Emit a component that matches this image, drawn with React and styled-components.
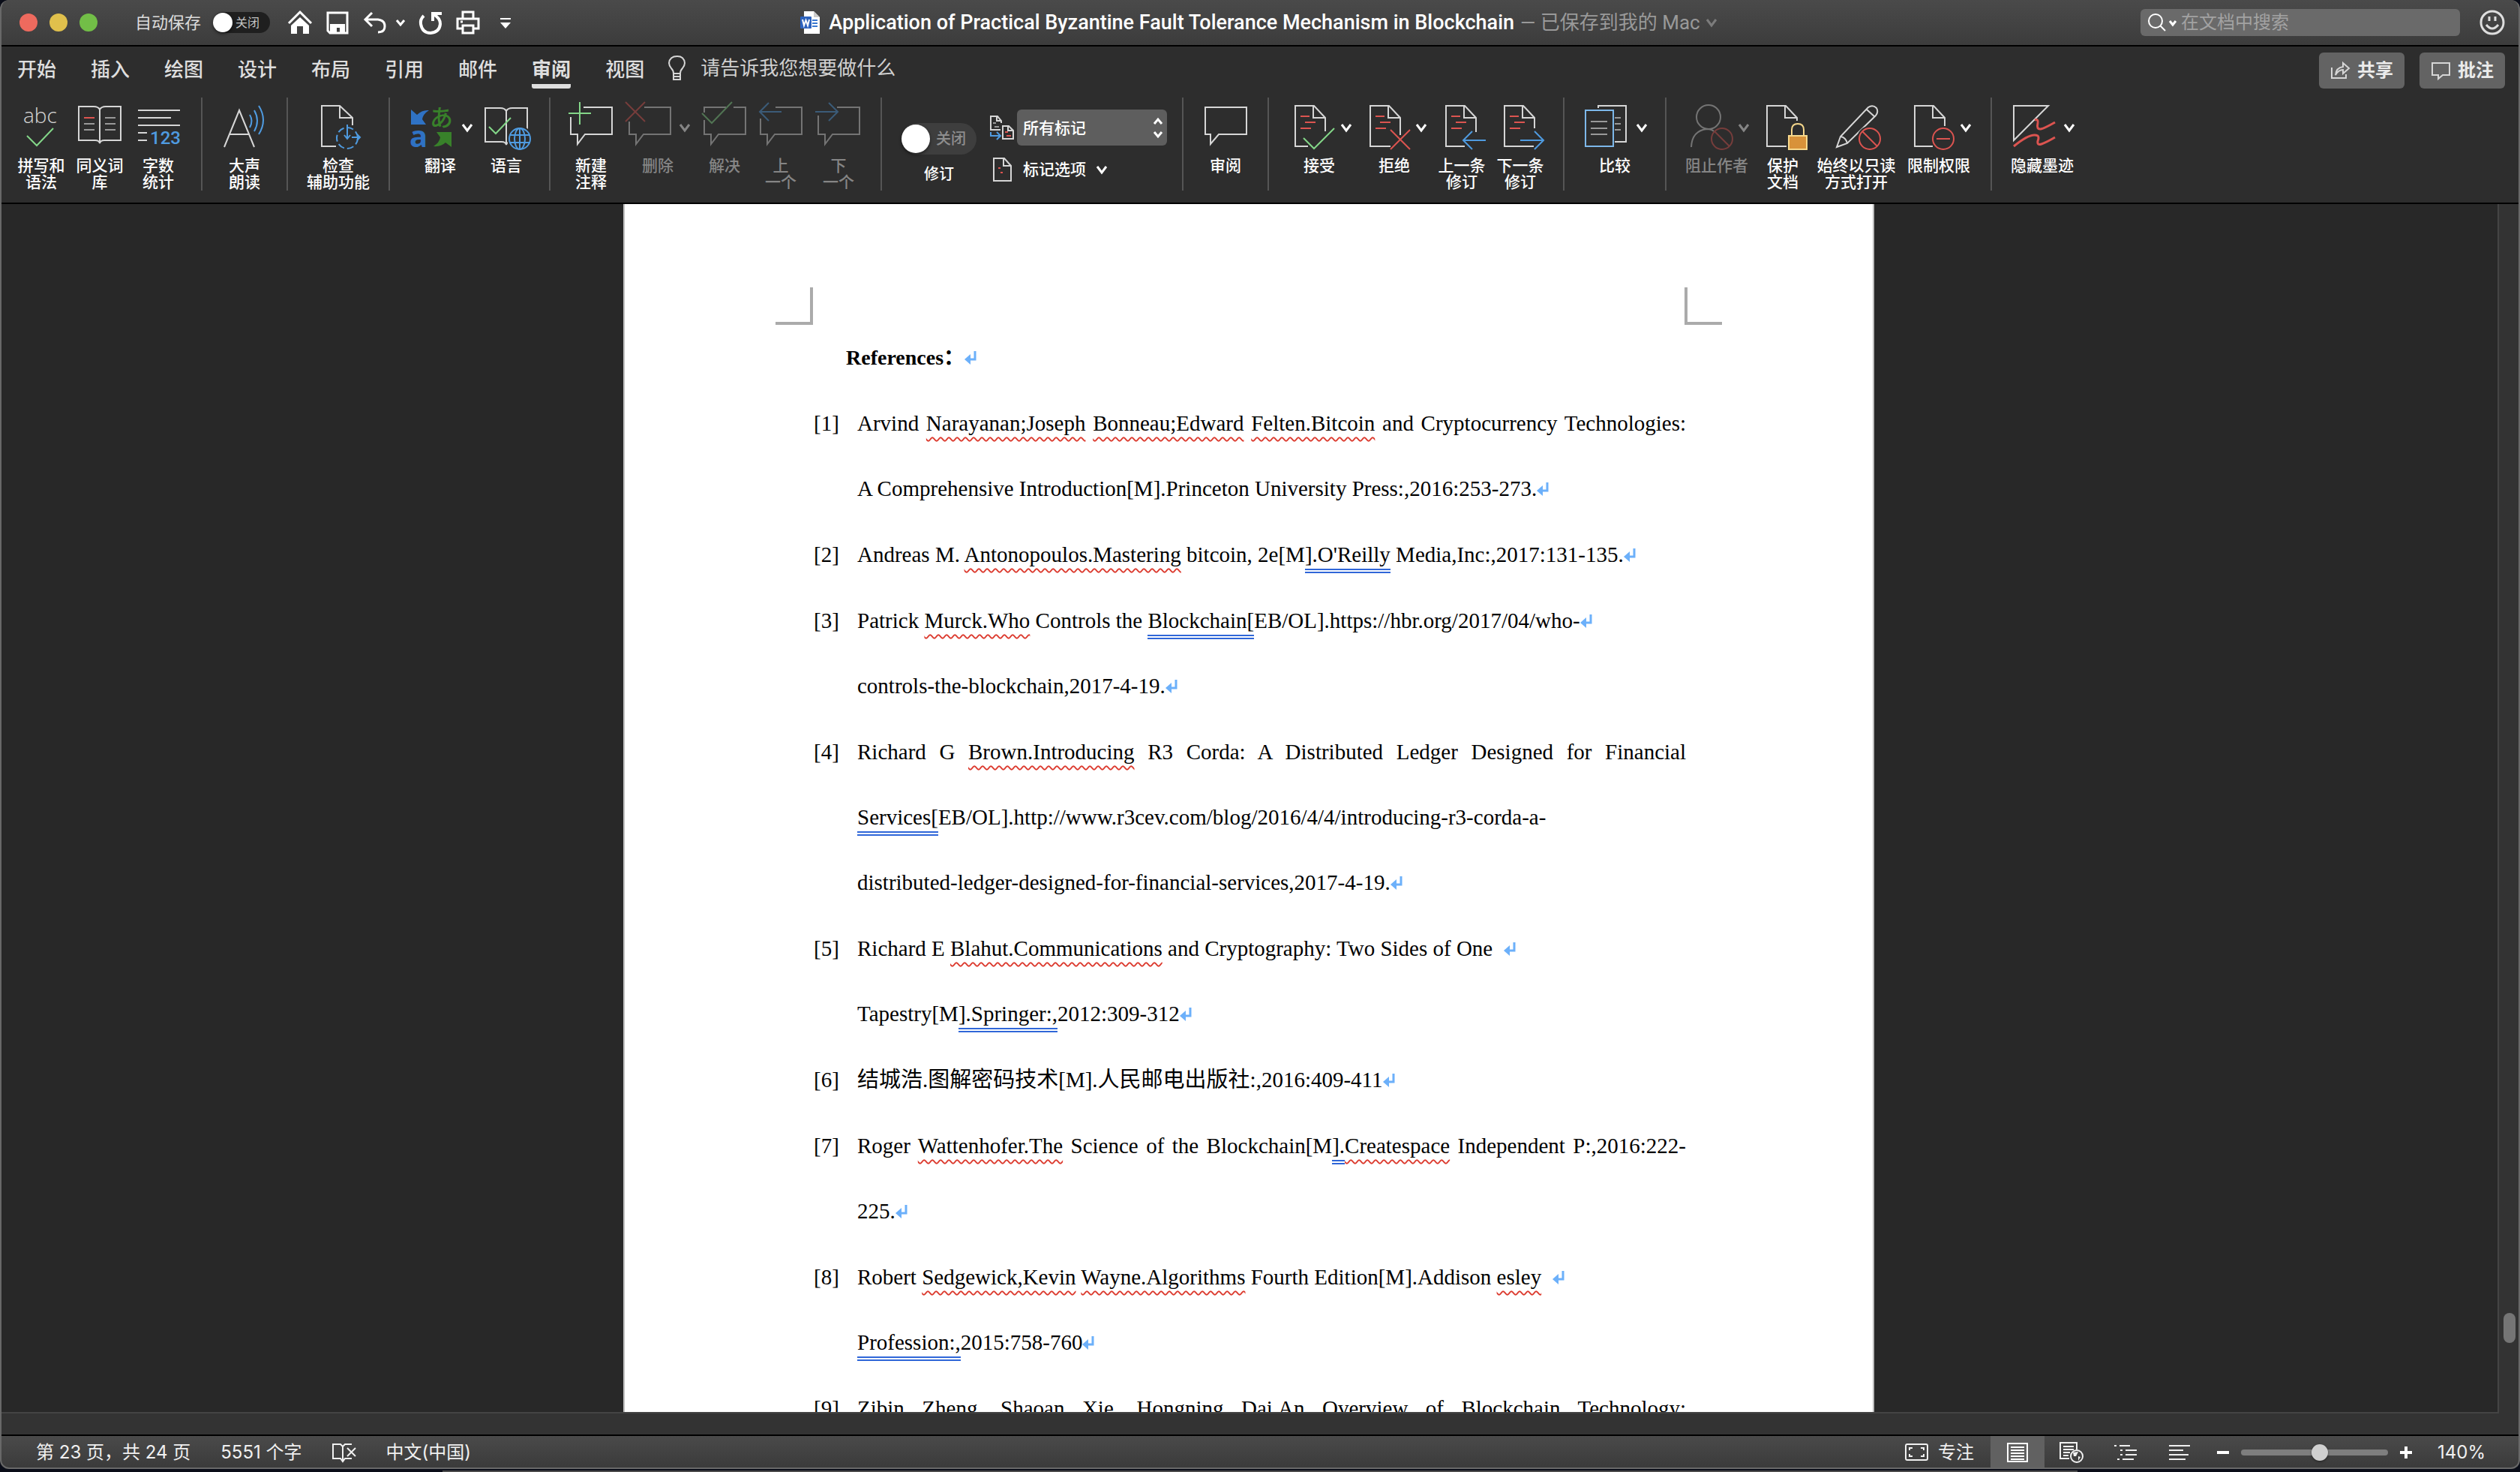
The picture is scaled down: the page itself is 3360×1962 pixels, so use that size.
import React, { Component } from 'react';
import styled, { createGlobalStyle, css } from "styled-components";

const GlobalStyle = createGlobalStyle`
  * {
    box-sizing: border-box;
  }
  body {
    margin: 0;
    background: #0a0d18;
    font-family: Inter, "Noto Sans CJK SC", sans-serif;
    color: #fff;
  }
  button, input, select {
    margin: 0;
    padding: 0;
    border: 0;
    background: none;
    color: inherit;
    font: inherit;
  }
`;

/* ---------- window ---------- */

const Desktop = styled.div`
  display: flex;
  flex-direction: column;
  height: 100vh;
`;
const Window = styled.div`
  position: relative;
  flex: 1;
  min-height: 0;
  display: flex;
  flex-direction: column;
  overflow: hidden;
  border-radius: 12px;
  background: #2d2d2d;
  &::after {
    content: '';
    position: absolute;
    inset: 0;
    border: 2px solid #686868;
    border-top: 0;
    border-radius: 12px;
    pointer-events: none;
  }
`;
const BackWindow = styled.div`
  height: 2px;
  margin: 2px 590px 0;
  background: #4c4c4c;
`;

/* ---------- title bar ---------- */

const TitleBar = styled.header`
  display: grid;
  grid-template-columns: 1fr auto 1fr;
  align-items: center;
  height: 62px;
  border-bottom: 2px solid #000;
  background: linear-gradient(#4a4a4a, #3c3c3c);
`;
const TitleLeft = styled.div`
  display: flex;
  align-items: center;
  padding-left: 26px;
`;
const Lights = styled.div`
  display: flex;
  gap: 16px;
  margin-right: 50px;
`;
const Light = styled.button`
  width: 24px;
  height: 24px;
  border-radius: 50%;
  background: ${p => p.$color};
`;
const AutoSave = styled.label`
  display: flex;
  align-items: center;
  gap: 16px;
  font-size: 22px;
  line-height: 30px;
  color: #dcdcdc;
`;
const Switch = styled.span`
  position: relative;
  display: flex;
  align-items: center;
  justify-content: flex-end;
  width: ${p => p.$large ? 100 : 76}px;
  height: ${p => p.$large ? 42 : 28}px;
  padding-right: 14px;
  border-radius: 21px;
  background: ${p => p.$large ? '#3e3e3e' : '#1f1f1f'};
  color: ${p => p.$large ? '#8e8e8e' : '#c4c4c4'};
  font-size: ${p => p.$large ? 20 : 16}px;
  line-height: 24px;
  input {
    appearance: none;
    position: absolute;
    left: 0;
    top: ${p => p.$large ? 2 : 1}px;
    width: ${p => p.$large ? 38 : 26}px;
    height: ${p => p.$large ? 38 : 26}px;
    border-radius: 50%;
    background: #fff;
    box-shadow: 0 2px 4px rgba(0, 0, 0, .5);
  }
`;
const QuickBar = styled.div`
  display: flex;
  align-items: center;
  gap: 18px;
  margin-left: 24px;
`;
const IconButton = styled.button`
  display: flex;
  align-items: center;
  gap: 12px;
  svg {
    display: block;
  }
`;
const DocTitle = styled.h1`
  display: flex;
  align-items: center;
  gap: 8px;
  margin: 0;
  font-family: Roboto, "Noto Sans CJK SC", sans-serif;
  font-size: 27px;
  line-height: 36px;
  font-weight: 500;
  white-space: nowrap;
  svg {
    margin-right: 4px;
  }
  small {
    font-size: 26px;
    font-weight: 400;
    color: #999;
  }
`;
const TitleRight = styled.div`
  display: flex;
  justify-content: flex-end;
  align-items: center;
  gap: 26px;
  padding-right: 20px;
`;
const Search = styled.label`
  display: flex;
  align-items: center;
  gap: 4px;
  width: 426px;
  height: 36px;
  padding-left: 10px;
  border-radius: 6px;
  background: #6a6a6a;
  input {
    flex: 1;
    min-width: 0;
    margin-left: 2px;
    font-size: 24px;
    line-height: 34px;
    outline: 0;
  }
  input::placeholder {
    color: #a2a2a2;
    opacity: 1;
  }
`;

/* ---------- tabs ---------- */

const TabRow = styled.div`
  display: flex;
  align-items: flex-start;
  height: 56px;
  padding: 0 20px 0 23px;
`;
const Tabs = styled.nav`
  display: flex;
  gap: 46px;
  padding-top: 14px;
`;
const Tab = styled.button`
  height: 42px;
  border-bottom: 6px solid ${p => p.$active ? '#dedede' : 'transparent'};
  border-radius: 3px;
  padding-bottom: 2px;
  font-size: 26px;
  line-height: 34px;
  font-weight: ${p => p.$active ? 700 : 500};
  color: #dedede;
`;
const TellMe = styled.button`
  display: flex;
  align-items: center;
  gap: 20px;
  margin: 10px auto 0 32px;
  font-size: 26px;
  line-height: 38px;
  color: #d0d0d0;
`;
const PillButton = styled.button`
  display: flex;
  align-items: center;
  justify-content: center;
  gap: 10px;
  width: 114px;
  height: 48px;
  margin: 8px 0 0 20px;
  border-radius: 6px;
  background: #636363;
  font-size: 24px;
  line-height: 34px;
  font-weight: 700;
  color: #ebebeb;
`;

/* ---------- ribbon ---------- */

const Ribbon = styled.section`
  display: flex;
  height: 154px;
  padding: 12px 16px 16px;
  border-bottom: 2px solid #000;
`;
const Group = styled.div`
  display: flex;
  padding-right: 18px;
  & + & {
    padding-left: 18px;
    border-left: 2px solid #555;
  }
`;
const ToolButton = styled.button`
  display: flex;
  flex-direction: column;
  align-items: center;
  gap: 8px;
  width: ${p => p.$width}px;
  padding-top: 8px;
  font-size: 21px;
  line-height: 22px;
  font-weight: 500;
  white-space: pre;
  ${p => p.disabled && css`
    color: #858585;
    svg {
      opacity: .42;
    }
  `}
`;
const ToolFace = styled.span`
  display: flex;
  align-items: center;
  gap: 8px;
`;
const TrackBox = styled.label`
  display: flex;
  flex-direction: column;
  align-items: center;
  gap: 14px;
  width: 116px;
  padding-top: 34px;
  font-size: 20px;
  line-height: 24px;
  font-weight: 500;
`;
const MarkupBox = styled.div`
  display: flex;
  flex-direction: column;
  gap: 16px;
  width: 248px;
  padding: 16px 2px 0 10px;
`;
const MarkupRow = styled.div`
  display: flex;
  align-items: center;
  gap: 4px;
`;
const SelectBox = styled.span`
  display: grid;
  flex: 1;
  align-items: center;
  border-radius: 6px;
  background: #5e5e5e;
  select, svg {
    grid-area: 1 / 1;
  }
  svg {
    justify-self: end;
    margin-right: 4px;
    pointer-events: none;
  }
  select {
    appearance: none;
    height: 48px;
    padding-left: 8px;
    font-size: 21px;
    font-weight: 500;
  }
`;
const OptionsButton = styled.button`
  display: flex;
  align-items: center;
  gap: 14px;
  padding-left: 8px;
  font-size: 21px;
  line-height: 32px;
  font-weight: 500;
`;

/* ---------- document ---------- */

const Workspace = styled.main`
  flex: 1;
  min-height: 0;
  display: flex;
  background: #333;
`;
const Canvas = styled.div`
  flex: 1;
  display: flex;
  justify-content: center;
  overflow: hidden;
  border: solid #444;
  border-width: 0 2px 2px 0;
  background: #282828;
`;
const Paper = styled.article`
  flex: 0 1 1668px;
  align-self: flex-start;
  padding: 111px 201px 0;
  border: solid #bdbdbd;
  border-width: 0 2px;
  background: #fff;
  color: #000;
  font-family: "Liberation Serif", "Noto Sans CJK SC", serif;
  font-size: 29px;
  line-height: 87px;
`;
const Corners = styled.div`
  display: flex;
  justify-content: space-between;
  &::before, &::after {
    content: '';
    width: 46px;
    height: 46px;
    border: solid #ababab;
    border-width: 0 4px 4px 0;
  }
  &::after {
    border-width: 0 0 4px 4px;
  }
`;
const Heading = styled.h2`
  margin: 0 0 1px;
  padding-left: 94px;
  font-size: 28px;
  line-height: 87px;
  font-weight: 700;
`;
const Entry = styled.div`
  display: grid;
  grid-template-columns: 58px 1fr;
  margin: 0 48px 1px 51px;
`;
const Line = styled.div`
  white-space: nowrap;
  text-align-last: ${p => p.$justify ? 'justify' : 'left'};
`;
const Spelling = styled.span`
  text-decoration: underline wavy #dc3b2f 2px;
  text-decoration-skip-ink: none;
  text-underline-offset: 8px;
`;
const Grammar = styled.span`
  padding-bottom: 3px;
  border-bottom: 6px double #2f66d8;
`;
const ScrollTrack = styled.div`
  width: 28px;
  display: flex;
  flex-direction: column;
  align-items: center;
  &::before {
    content: '';
    flex: 1476 0 0;
  }
  &::after {
    content: '';
    flex: 94 0 0;
  }
`;
const ScrollThumb = styled.div`
  width: 16px;
  height: 40px;
  border-radius: 8px;
  background: #757575;
`;
const BottomStrip = styled.div`
  height: 28px;
  background: #333;
`;

/* ---------- status bar ---------- */

const StatusBar = styled.footer`
  display: flex;
  align-items: center;
  height: 46px;
  padding: 0 48px;
  border-top: 2px solid #000;
  background: linear-gradient(#4a4a4a, #3a3a3a);
  font-size: 24px;
  line-height: 34px;
  color: #f0f0f0;
`;
const StatusLeft = styled.div`
  display: flex;
  align-items: center;
  gap: 40px;
  margin-right: auto;
`;
const FocusButton = styled(IconButton)`
  margin-right: 22px;
`;
const ViewButton = styled.button`
  display: flex;
  align-items: center;
  justify-content: center;
  width: 72px;
  height: 44px;
  background: ${p => p.$active ? '#616161' : 'none'};
`;
const Zoom = styled.div`
  display: flex;
  align-items: center;
  gap: 16px;
  margin-left: 14px;
  output {
    margin-left: 18px;
    width: 62px;
  }
`;
const Slider = styled.input`
  appearance: none;
  width: 196px;
  height: 8px;
  border-radius: 4px;
  background: #7e7e7e;
  &::-webkit-slider-thumb {
    appearance: none;
    width: 22px;
    height: 22px;
    border-radius: 50%;
    background: #d0d0d0;
    box-shadow: 0 1px 3px rgba(0, 0, 0, .5);
  }
`;

/* ---------- icons ---------- */

const LIGHT = '#d6d6d6';
const GREEN = '#83d688';
const RED = '#dc5450';
const BLUE = '#4f9be0';

const Svg = ({ w = 64, h = 64, color = LIGHT, width = 2, children }) => (
  <svg
    width={w}
    height={h}
    viewBox={`0 0 ${w} ${h}`}
    fill="none"
    stroke={color}
    strokeWidth={width}
    overflow="visible"
    aria-hidden="true"
  >
    {children}
  </svg>
);

const Chevron = ({ color = '#fff', w = 14, h = 10 }) => (
  <Svg w={w} h={h} color={color} width={3}>
    <path d={`M1 1L${w / 2} ${h - 1}L${w - 1} 1`} />
  </Svg>
);

const ReturnMark = () => (
  <Svg w={16} h={18} color="#6cb0fa" width={3}>
    <path d="M14 0V11H4" />
    <path d="M0 11L8 4V18Z" fill="#6cb0fa" stroke="none" />
  </Svg>
);

const bubble = "M{x} 5H60V41H24L14 54V41H5V{y}";
const Bubble = ({ x, y }) => <path d={bubble.replace('{x}', x).replace('{y}', y)} />;

const Doc = ({ end = 32, foot = 28 }) => (
  <>
    <path d={`M${foot} 57H11V3H36L51 19V${end}`} />
    <path d="M35 3V19H51" />
  </>
);
const RedLines = () => <path d="M18 17H30M24 25H38M18 33H32" stroke={RED} />;
const Forbidden = () => (
  <g stroke={RED}>
    <circle cx="50" cy="47" r="14" />
    <path d="M40 37L60 57" />
  </g>
);
const Book = ({ y = 4 }) => (
  <g transform={`translate(0 ${y})`}>
    <path d="M32 4Q30 0 24 0H4V45H26Q31 45 32 49Q33 45 38 45H60V0H40Q34 0 32 4V49" />
  </g>
);

const icons = {
  spelling: (
    <Svg>
      <text x="8" y="26" fontFamily="Open Sans" fontWeight="300" fontSize="28" fill={LIGHT} stroke="none">abc</text>
      <path d="M13 43L26 56L48 33" stroke={GREEN} />
    </Svg>
  ),
  thesaurus: (
    <Svg>
      <Book />
      <path d="M11 19H25" stroke={RED} />
      <path d="M11 27H25M11 35H25M39 19H53M39 27H53M39 35H53" stroke="#999" />
    </Svg>
  ),
  count: (
    <Svg>
      <path d="M5 9H61M5 19H49M5 29H61M5 39H17M5 49H17" />
      <text x="21" y="54" fontFamily="Roboto" fontSize="24" fill={BLUE} stroke="none">123</text>
    </Svg>
  ),
  speak: (
    <Svg>
      <path d="M5 58L25 9L45 58M11 41H39" />
      <path d="M39 15Q44 23 39 32M45 9Q53 23 45 37M51 3Q63 22 51 41" stroke={BLUE} />
    </Svg>
  ),
  accessibility: (
    <Svg>
      <path d="M29 57H10V3H34L51 19V29M34 3V19H51" />
      <circle cx="44" cy="46" r="14" stroke={BLUE} strokeDasharray="9 4" />
      <path d="M44 28V46M40 42L44 47L48 42M50 45H61M57 41L61 45L57 49" stroke={BLUE} />
    </Svg>
  ),
  translate: (
    <Svg>
      <path d="M4 8L12 15Q19 8 28 9Q20 14 19 21L24 28H4Z" fill="#2f72c4" stroke="none" />
      <path d="M58 58L50 52Q44 58 34 57Q42 52 43 45L38 38H58Z" fill="#38812a" stroke="none" />
      <text x="29" y="30" fontFamily="Noto Sans CJK JP" fontWeight="500" fontSize="31" fill="#38812a" stroke="none">あ</text>
      <text x="2" y="58" fontFamily="Open Sans" fontWeight="700" fontSize="40" fill="#2f72c4" stroke="none">a</text>
    </Svg>
  ),
  language: (
    <Svg>
      <Book y={6} />
      <path d="M9 31L18 40L38 19" stroke={GREEN} />
      <circle cx="50" cy="47" r="17" fill="#2d2d2d" stroke="none" />
      <g stroke={BLUE}>
        <circle cx="50" cy="47" r="14" />
        <ellipse cx="50" cy="47" rx="7" ry="14" />
        <path d="M50 33V61M37 42H63M37 52H63" />
      </g>
    </Svg>
  ),
  newComment: (
    <Svg>
      <Bubble x={22} y={18} />
      <path d="M2 13H32M17 -2V28" stroke={GREEN} />
    </Svg>
  ),
  deleteComment: (
    <Svg>
      <Bubble x={25} y={24} />
      <path d="M0 -2L26 24M26 -2L0 24" stroke={RED} />
    </Svg>
  ),
  resolve: (
    <Svg>
      <path d="M5 12V5H34M44 5H60V41H24L14 54V41H5V22" />
      <path d="M2 13L15 26L42 -2" stroke={GREEN} />
    </Svg>
  ),
  prevComment: (
    <Svg>
      <Bubble x={25} y={20} />
      <path d="M33 11H4M16 -1L4 11L16 23" stroke={BLUE} />
    </Svg>
  ),
  nextComment: (
    <Svg>
      <Bubble x={30} y={16} />
      <path d="M1 11H31M19 -1L31 11L19 23" stroke={BLUE} />
    </Svg>
  ),
  reviewing: (
    <Svg>
      <path d="M5 5H60V41H23L12 54V41H5Z" />
    </Svg>
  ),
  accept: (
    <Svg>
      <Doc end={37} />
      <RedLines />
      <path d="M22 46L36 60L63 33" stroke={GREEN} />
    </Svg>
  ),
  reject: (
    <Svg>
      <Doc end={42} foot={38} />
      <RedLines />
      <path d="M38 35L64 61M64 35L38 61" stroke={RED} />
    </Svg>
  ),
  prevChange: (
    <Svg>
      <Doc end={38} foot={36} />
      <RedLines />
      <path d="M64 49H34M46 37L34 49L46 61" stroke={BLUE} />
    </Svg>
  ),
  nextChange: (
    <Svg>
      <Doc end={33} foot={50} />
      <RedLines />
      <path d="M32 49H63M51 37L63 49L51 61" stroke={BLUE} />
    </Svg>
  ),
  compare: (
    <Svg>
      <path d="M21 6V3H58V51H43" />
      <path d="M4 9H41V57H4Z" stroke="#7db8ea" />
      <path d="M11 24H33M11 33H33M11 41H33M43 19H51M43 27H51M43 35H51" stroke="#999" />
    </Svg>
  ),
  blockAuthors: (
    <Svg>
      <circle cx="32" cy="18" r="16" />
      <path d="M9 58Q10 36 30 34Q36 34 39 37" />
      <Forbidden />
    </Svg>
  ),
  protect: (
    <Svg>
      <Doc end={23} foot={37} />
      <path d="M44 43V35Q44 27 52 27Q60 27 60 35V43" stroke="#f6d88c" />
      <path d="M40 43H64V61H40Z" fill="#d8923a" stroke="#f6d88c" />
    </Svg>
  ),
  readOnly: (
    <Svg>
      <path d="M6 58L11 44L48 5Q54 1 59 6Q62 11 58 16L20 53ZM11 44Q18 45 20 53M46 8L57 18" />
      <circle cx="50" cy="47" r="17" fill="#2d2d2d" stroke="none" />
      <Forbidden />
    </Svg>
  ),
  restrict: (
    <Svg>
      <Doc end={30} foot={35} />
      <circle cx="49" cy="47" r="14" stroke={RED} />
      <path d="M40 47H58" stroke={RED} />
    </Svg>
  ),
  hideInk: (
    <Svg>
      <path d="M5 3H51L5 49Z" />
      <path d="M33 22Q38 20 37 26Q35 35 41 34Q46 33 60 25M5 57Q28 38 37 43Q39 45 37 50Q36 56 42 54Q48 52 60 45" stroke={RED} strokeWidth="3" />
    </Svg>
  ),
};

const WordIcon = () => (
  <Svg w={26} h={30}>
    <path d="M5 0H18L26 8V30H5Z" fill="#fff" stroke="none" />
    <path d="M18 0V8H26Z" fill="#ccc" stroke="none" />
    <rect x="0" y="7" width="15" height="16" rx="1" fill="#2e63bd" stroke="none" />
    <path d="M3 11L5 19L7.500 12L10 19L12 11" stroke="#fff" />
    <path d="M16 12H23M16 16H23M16 20H23" stroke="#3a78d0" />
  </Svg>
);

/* ---------- parts ---------- */

const Tool = ({ icon, label, width, menu, disabled }) => (
  <ToolButton $width={width} disabled={disabled}>
    <ToolFace>
      {icons[icon]}
      {menu && <Chevron />}
    </ToolFace>
    <span>{label}</span>
  </ToolButton>
);

const toolGroups = [
  [
    { icon: 'spelling', label: '拼写和\n语法', width: 78 },
    { icon: 'thesaurus', label: '同义词\n库', width: 78 },
    { icon: 'count', label: '字数\n统计', width: 78 },
  ],
  [{ icon: 'speak', label: '大声\n朗读', width: 76 }],
  [{ icon: 'accessibility', label: '检查\n辅助功能', width: 98 }],
  [
    { icon: 'translate', label: '翻译', width: 98, menu: true },
    { icon: 'language', label: '语言', width: 78 },
  ],
  [
    { icon: 'newComment', label: '新建\n注释', width: 72 },
    { icon: 'deleteComment', label: '删除', width: 106, menu: true, disabled: true },
    { icon: 'resolve', label: '解决', width: 72, disabled: true },
    { icon: 'prevComment', label: '上\n一个', width: 78, disabled: true },
    { icon: 'nextComment', label: '下\n一个', width: 76, disabled: true },
  ],
];
const changeGroups = [
  [{ icon: 'reviewing', label: '审阅', width: 76 }],
  [
    { icon: 'accept', label: '接受', width: 98, menu: true },
    { icon: 'reject', label: '拒绝', width: 102, menu: true },
    { icon: 'prevChange', label: '上一条\n修订', width: 78 },
    { icon: 'nextChange', label: '下一条\n修订', width: 78 },
  ],
  [{ icon: 'compare', label: '比较', width: 98, menu: true }],
  [
    { icon: 'blockAuthors', label: '阻止作者', width: 98, menu: true, disabled: true },
    { icon: 'protect', label: '保护\n文档', width: 78 },
    { icon: 'readOnly', label: '始终以只读\n方式打开', width: 118 },
    { icon: 'restrict', label: '限制权限', width: 102, menu: true },
  ],
  [{ icon: 'hideInk', label: '隐藏墨迹', width: 98, menu: true }],
];

const renderGroups = groups => groups.map(
  tools => (
    <Group key={tools[0].icon}>
      {tools.map(tool => <Tool key={tool.icon} {...tool} />)}
    </Group>
  )
);

const Reference = ({ no, children }) => (
  <Entry>
    <span>[{no}]</span>
    <div>{children}</div>
  </Entry>
);

const tabs = ['开始', '插入', '绘图', '设计', '布局', '引用', '邮件', '审阅', '视图'];

class App extends Component {
  state = {
    tab: '审阅',
    autoSave: false,
    tracking: false,
    zoom: 140,
  }

  setTab = tab => {
    this.setState({ tab });
  }

  renderTitleBar() {
    return (
      <TitleBar>
        <TitleLeft>
          <Lights>
            <Light $color="#ee6a5e" aria-label="关闭窗口" />
            <Light $color="#e0c04c" aria-label="最小化" />
            <Light $color="#72be47" aria-label="缩放" />
          </Lights>
          <AutoSave>
            自动保存
            <Switch>
              <input
                type="checkbox"
                checked={this.state.autoSave}
                onChange={e => this.setState({ autoSave: e.target.checked })}
              />
              关闭
            </Switch>
          </AutoSave>
          <QuickBar>
            <IconButton aria-label="主页">
              <Svg w={32} h={32} color="#fff" width={3}>
                <path d="M1 17L16 2L31 17" />
                <path d="M4 20L16 9L28 20V31H20V21H12V31H4Z" fill="#fff" stroke="none" />
              </Svg>
            </IconButton>
            <IconButton aria-label="保存">
              <Svg w={32} h={32} color="#fff" width={3}>
                <path d="M3 3H29V30H6L3 27Z" />
                <path d="M6 18H26V30H19V23H15V30H6Z" fill="#fff" stroke="none" />
              </Svg>
            </IconButton>
            <IconButton aria-label="撤消">
              <Svg w={32} h={32} color="#fff" width={3}>
                <path d="M12 3L3 12L12 21M3 12H20Q29 13 29 21Q29 29 20 29" />
              </Svg>
              <Chevron w={12} h={8} />
            </IconButton>
            <IconButton aria-label="重做">
              <Svg w={32} h={32} color="#fff" width={4}>
                <path d="M7 7Q2 12 3 18Q5 30 16 30Q28 29 29 18Q29 10 20 5M19 14V4H31" />
              </Svg>
            </IconButton>
            <IconButton aria-label="打印">
              <Svg w={32} h={32} color="#fff" width={3}>
                <path d="M9 11V2H23V11M8 24H2V11H30V24H24M9 20H23V30H9Z" />
                <path d="M6 15H9" />
              </Svg>
            </IconButton>
            <IconButton aria-label="自定义工具栏">
              <Svg w={32} h={32} color="#fff" width={2}>
                <path d="M9 11H23" />
                <path d="M9 16H23L16 24Z" fill="#fff" stroke="none" />
              </Svg>
            </IconButton>
          </QuickBar>
        </TitleLeft>
        <DocTitle>
          <WordIcon />
          Application of Practical Byzantine Fault Tolerance Mechanism in Blockchain
          <small>— 已保存到我的 Mac</small>
          <Chevron color="#7c7c7c" />
        </DocTitle>
        <TitleRight>
          <Search>
            <Svg w={24} h={24} color="#fff">
              <circle cx="10" cy="10" r="9" />
              <path d="M16 16L23 23" />
            </Svg>
            <Chevron w={10} h={7} />
            <input type="text" placeholder="在文档中搜索" />
          </Search>
          <IconButton aria-label="反馈">
            <Svg w={34} h={34} color="#dedede" width={3}>
              <circle cx="17" cy="17" r="15" />
              <path d="M13 9V15M21 9V15M9 20Q17 30 25 20" />
            </Svg>
          </IconButton>
        </TitleRight>
      </TitleBar>
    );
  }

  renderTabs() {
    return (
      <TabRow>
        <Tabs>
          {tabs.map(
            tab => (
              <Tab key={tab} $active={tab === this.state.tab} onClick={() => this.setTab(tab)}>
                {tab}
              </Tab>
            )
          )}
        </Tabs>
        <TellMe>
          <Svg w={23} h={34}>
            <path d="M7 24Q7 20 4 17Q1 13 1 10Q2 1 12 1Q21 1 22 10Q22 13 19 17Q16 20 16 24ZM7 24V32H16V24M7 28H16" />
          </Svg>
          请告诉我您想要做什么
        </TellMe>
        <PillButton>
          <Svg w={26} h={24}>
            <path d="M2 8V22H21V17M7 18Q8 8 17 7V2L25 9L17 16V11Q11 11 7 18Z" />
          </Svg>
          共享
        </PillButton>
        <PillButton>
          <Svg w={26} h={24}>
            <path d="M2 2H25V18H16L10 23V18H2Z" />
          </Svg>
          批注
        </PillButton>
      </TabRow>
    );
  }

  renderRibbon() {
    return (
      <Ribbon>
        {renderGroups(toolGroups)}
        <Group>
          <TrackBox>
            <Switch $large>
              <input
                type="checkbox"
                checked={this.state.tracking}
                onChange={e => this.setState({ tracking: e.target.checked })}
              />
              关闭
            </Switch>
            修订
          </TrackBox>
          <MarkupBox>
            <MarkupRow>
              <Svg w={32} h={32}>
                <path d="M14 19H1V1H10L15 7V10M9 1V7H15M17 31V14H25L31 20V31ZM24 14V20H31" />
                <path d="M4 10H8M6 15H12" stroke="#999" />
                <path d="M20 22H24M22 27H28" stroke={RED} />
                <path d="M1 22V27H13M9 22L14 27L9 32" stroke={BLUE} />
              </Svg>
              <SelectBox>
                <select aria-label="审阅显示" defaultValue="all">
                  <option value="all">所有标记</option>
                  <option value="simple">简单标记</option>
                  <option value="none">无标记</option>
                </select>
                <Svg w={16} h={28} color="#fff" width={3}>
                  <path d="M3 9L8 3L13 9M3 20L8 26L13 20" />
                </Svg>
              </SelectBox>
            </MarkupRow>
            <MarkupRow>
              <Svg w={32} h={32}>
                <path d="M5 1H19L28 11V31H5ZM18 1V11H28" />
                <path d="M11 14H14M14 20H17" stroke={RED} />
              </Svg>
              <OptionsButton>
                标记选项
                <Chevron />
              </OptionsButton>
            </MarkupRow>
          </MarkupBox>
        </Group>
        {renderGroups(changeGroups)}
      </Ribbon>
    );
  }

  renderDocument() {
    return (
      <Paper>
        <Corners />
        <Heading>References：<ReturnMark /></Heading>
        <Reference no={1}>
          <Line $justify>
            Arvind <Spelling>Narayanan;Joseph</Spelling> <Spelling>Bonneau;Edward</Spelling> <Spelling>Felten.Bitcoin</Spelling> and Cryptocurrency Technologies:
          </Line>
          <Line>A Comprehensive Introduction[M].Princeton University Press:,2016:253-273.<ReturnMark /></Line>
        </Reference>
        <Reference no={2}>
          <Line>
            Andreas M. <Spelling>Antonopoulos.Mastering</Spelling> bitcoin, 2e[M<Grammar>].O'Reilly</Grammar> Media,Inc:,2017:131-135.<ReturnMark />
          </Line>
        </Reference>
        <Reference no={3}>
          <Line>
            Patrick <Spelling>Murck.Who</Spelling> Controls the <Grammar>Blockchain[</Grammar>EB/OL].https://hbr.org/2017/04/who-<ReturnMark />
          </Line>
          <Line>controls-the-blockchain,2017-4-19.<ReturnMark /></Line>
        </Reference>
        <Reference no={4}>
          <Line $justify>
            Richard G <Spelling>Brown.Introducing</Spelling> R3 Corda: A Distributed Ledger Designed for Financial
          </Line>
          <Line><Grammar>Services[</Grammar>EB/OL].http://www.r3cev.com/blog/2016/4/4/introducing-r3-corda-a-</Line>
          <Line>distributed-ledger-designed-for-financial-services,2017-4-19.<ReturnMark /></Line>
        </Reference>
        <Reference no={5}>
          <Line>
            Richard E <Spelling>Blahut.Communications</Spelling> and Cryptography: Two Sides of One&nbsp; <ReturnMark />
          </Line>
          <Line>Tapestry[M<Grammar>].Springer:,</Grammar>2012:309-312<ReturnMark /></Line>
        </Reference>
        <Reference no={6}>
          <Line>结城浩.图解密码技术[M].人民邮电出版社:,2016:409-411<ReturnMark /></Line>
        </Reference>
        <Reference no={7}>
          <Line $justify>
            Roger <Spelling>Wattenhofer.The</Spelling> Science of the Blockchain[M<Grammar>].</Grammar><Spelling>Createspace</Spelling> Independent P:,2016:222-
          </Line>
          <Line>225.<ReturnMark /></Line>
        </Reference>
        <Reference no={8}>
          <Line>
            Robert <Spelling>Sedgewick,Kevin</Spelling> <Spelling>Wayne.Algorithms</Spelling> Fourth Edition[M].Addison <Spelling>esley</Spelling>&nbsp; <ReturnMark />
          </Line>
          <Line><Grammar>Profession:,</Grammar>2015:758-760<ReturnMark /></Line>
        </Reference>
        <Reference no={9}>
          <Line $justify>Zibin Zheng, Shaoan Xie, Hongning Dai.An Overview of Blockchain Technology:</Line>
        </Reference>
      </Paper>
    );
  }

  renderStatusBar() {
    const { zoom } = this.state;
    return (
      <StatusBar>
        <StatusLeft>
          <span>第 23 页，共 24 页</span>
          <span>5551 个字</span>
          <IconButton aria-label="拼写检查">
            <Svg w={32} h={26} color="#f0f0f0">
              <path d="M26 2H17L14 5L11 2H1V21H11L14 25L17 21H26M14 5V24M20 7L31 18M31 7L20 18" />
            </Svg>
          </IconButton>
          <span>中文(中国)</span>
        </StatusLeft>
        <FocusButton>
          <Svg w={32} h={24} color="#f0f0f0">
            <rect x="1" y="1" width="29" height="21" rx="2" />
            <path d="M6 9V6H10M21 6H25V9M25 14V17H21M10 17H6V14" />
          </Svg>
          专注
        </FocusButton>
        <ViewButton $active aria-label="页面视图">
          <Svg w={28} h={26} color="#fff">
            <path d="M1 1H27V25H1ZM5 6H23M5 10H23M5 14H23M5 18H23M5 22H23" />
          </Svg>
        </ViewButton>
        <ViewButton aria-label="Web 版式">
          <Svg w={32} h={28} color="#f0f0f0">
            <path d="M13 22H1V1H23V10M5 6H19M5 10H19M5 14H14M5 18H12" />
            <circle cx="23" cy="19" r="8" />
            <path d="M18 14L25 13L22 19L19 19ZM25 19L28 20L25 25Z" fill="#f0f0f0" stroke="none" />
          </Svg>
        </ViewButton>
        <ViewButton aria-label="大纲">
          <Svg w={30} h={22} color="#f0f0f0">
            <path d="M0 2H3M7 2H21M8 8H11M15 8H30M8 14H11M15 14H30M4 20H7M11 20H26" />
          </Svg>
        </ViewButton>
        <ViewButton aria-label="草稿">
          <Svg w={28} h={22} color="#f0f0f0">
            <path d="M0 2H28M0 8H19M0 14H26M0 20H22" />
          </Svg>
        </ViewButton>
        <Zoom>
          <IconButton aria-label="缩小">
            <Svg w={16} h={16} color="#fff" width={4}>
              <path d="M0 8H16" />
            </Svg>
          </IconButton>
          <Slider
            type="range"
            aria-label="显示比例"
            min="10"
            max="250"
            value={zoom}
            onChange={e => this.setState({ zoom: Number(e.target.value) })}
          />
          <IconButton aria-label="放大">
            <Svg w={16} h={16} color="#fff" width={4}>
              <path d="M0 8H16M8 0V16" />
            </Svg>
          </IconButton>
          <output>{zoom}%</output>
        </Zoom>
      </StatusBar>
    );
  }

  render() {
    return (
      <Desktop>
        <GlobalStyle />
        <Window>
          {this.renderTitleBar()}
          {this.renderTabs()}
          {this.renderRibbon()}
          <Workspace>
            <Canvas>{this.renderDocument()}</Canvas>
            <ScrollTrack>
              <ScrollThumb />
            </ScrollTrack>
          </Workspace>
          <BottomStrip />
          {this.renderStatusBar()}
        </Window>
        <BackWindow />
      </Desktop>
    );
  }
}

export default App;
